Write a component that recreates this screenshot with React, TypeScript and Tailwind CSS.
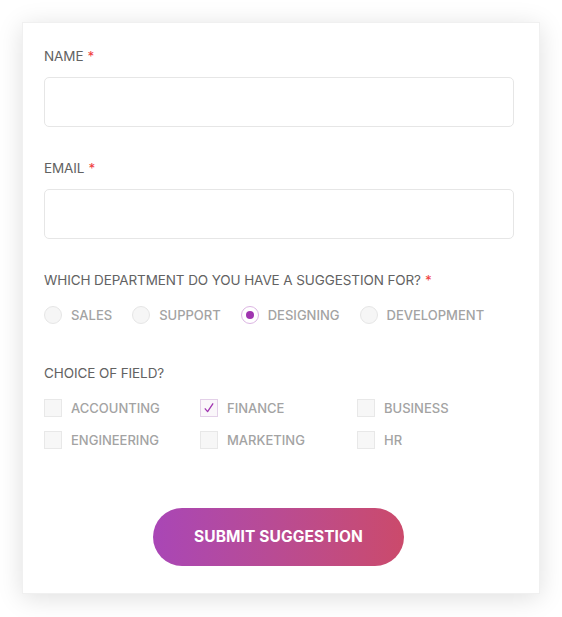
import React from "react";

const font = { fontFamily: "Inter, 'Noto Sans', sans-serif" };

function Label({ text, required }: { text: string; required?: boolean }) {
  return (
    <div className="text-[13.5px] leading-[21px] text-[#626262] font-normal tracking-[-0.1px]">
      {text}
      {required && <span className="text-[#f0413f] ml-[4px]">*</span>}
    </div>
  );
}

function Radio({ label, checked }: { label: string; checked?: boolean }) {
  return (
    <div className="flex items-center h-[18px]">
      <div
        className={
          checked
            ? "w-[18px] h-[18px] rounded-full border border-[#dcb6e3] bg-white flex items-center justify-center"
            : "w-[18px] h-[18px] rounded-full border border-[#e6e6e6] bg-[#f6f6f6]"
        }
      >
        {checked && <div className="w-[8px] h-[8px] rounded-full bg-[#a035b0]" />}
      </div>
      <span className="ml-[9px] text-[13px] leading-[18px] font-medium text-[#a3a3a3]">{label}</span>
    </div>
  );
}

function Check({ label, checked }: { label: string; checked?: boolean }) {
  return (
    <div className="flex items-center h-[18px]">
      <div
        className={
          checked
            ? "w-[18px] h-[18px] border border-[#e3d0e8] bg-[#faf7fa] flex items-center justify-center"
            : "w-[18px] h-[18px] border border-[#e8e8e8] bg-[#f7f7f7]"
        }
      >
        {checked && (
          <svg width="12" height="12" viewBox="0 0 12 12">
            <path d="M2.2 6.8 L4.6 9.6 L9.8 1.8" fill="none" stroke="#a035b0" strokeWidth="1.3" strokeLinecap="round" strokeLinejoin="round" />
          </svg>
        )}
      </div>
      <span className="ml-[9px] text-[13px] leading-[18px] font-medium text-[#a3a3a3]">{label}</span>
    </div>
  );
}

export default function App() {
  return (
    <div className="w-[562px] h-[617px] bg-white pt-[22px] pl-[22px]" style={font}>
      <div className="w-[518px] h-[572px] bg-white border border-[#f0f0f0] shadow-[0_4px_24px_rgba(0,0,0,0.13)] pl-[21px] pr-[25px] pt-[23px]">
        <Label text="NAME" required />
        <div className="mt-[10px] h-[50px] border border-[#e6e6e6] rounded-[5px]" />
        <div className="mt-[31px]">
          <Label text="EMAIL" required />
        </div>
        <div className="mt-[10px] h-[50px] border border-[#e6e6e6] rounded-[5px]" />
        <div className="mt-[31px]">
          <Label text="WHICH DEPARTMENT DO YOU HAVE A SUGGESTION FOR?" required />
        </div>
        <div className="mt-[15px] flex items-center gap-[20px]">
          <Radio label="SALES" />
          <Radio label="SUPPORT" />
          <Radio label="DESIGNING" checked />
          <Radio label="DEVELOPMENT" />
        </div>
        <div className="mt-[39px]">
          <Label text="CHOICE OF FIELD?" />
        </div>
        <div className="mt-[15px] grid grid-cols-[156px_157px_1fr] gap-y-[14px]">
          <Check label="ACCOUNTING" />
          <Check label="FINANCE" checked />
          <Check label="BUSINESS" />
          <Check label="ENGINEERING" />
          <Check label="MARKETING" />
          <Check label="HR" />
        </div>
        <div className="mt-[59px] flex justify-center">
          <button className="ml-[-1px] w-[251px] h-[58px] rounded-full bg-gradient-to-r from-[#a946b6] to-[#cb4a6b] text-white text-[15.5px] font-bold tracking-[0.1px]">
            SUBMIT SUGGESTION
          </button>
        </div>
      </div>
    </div>
  );
}
